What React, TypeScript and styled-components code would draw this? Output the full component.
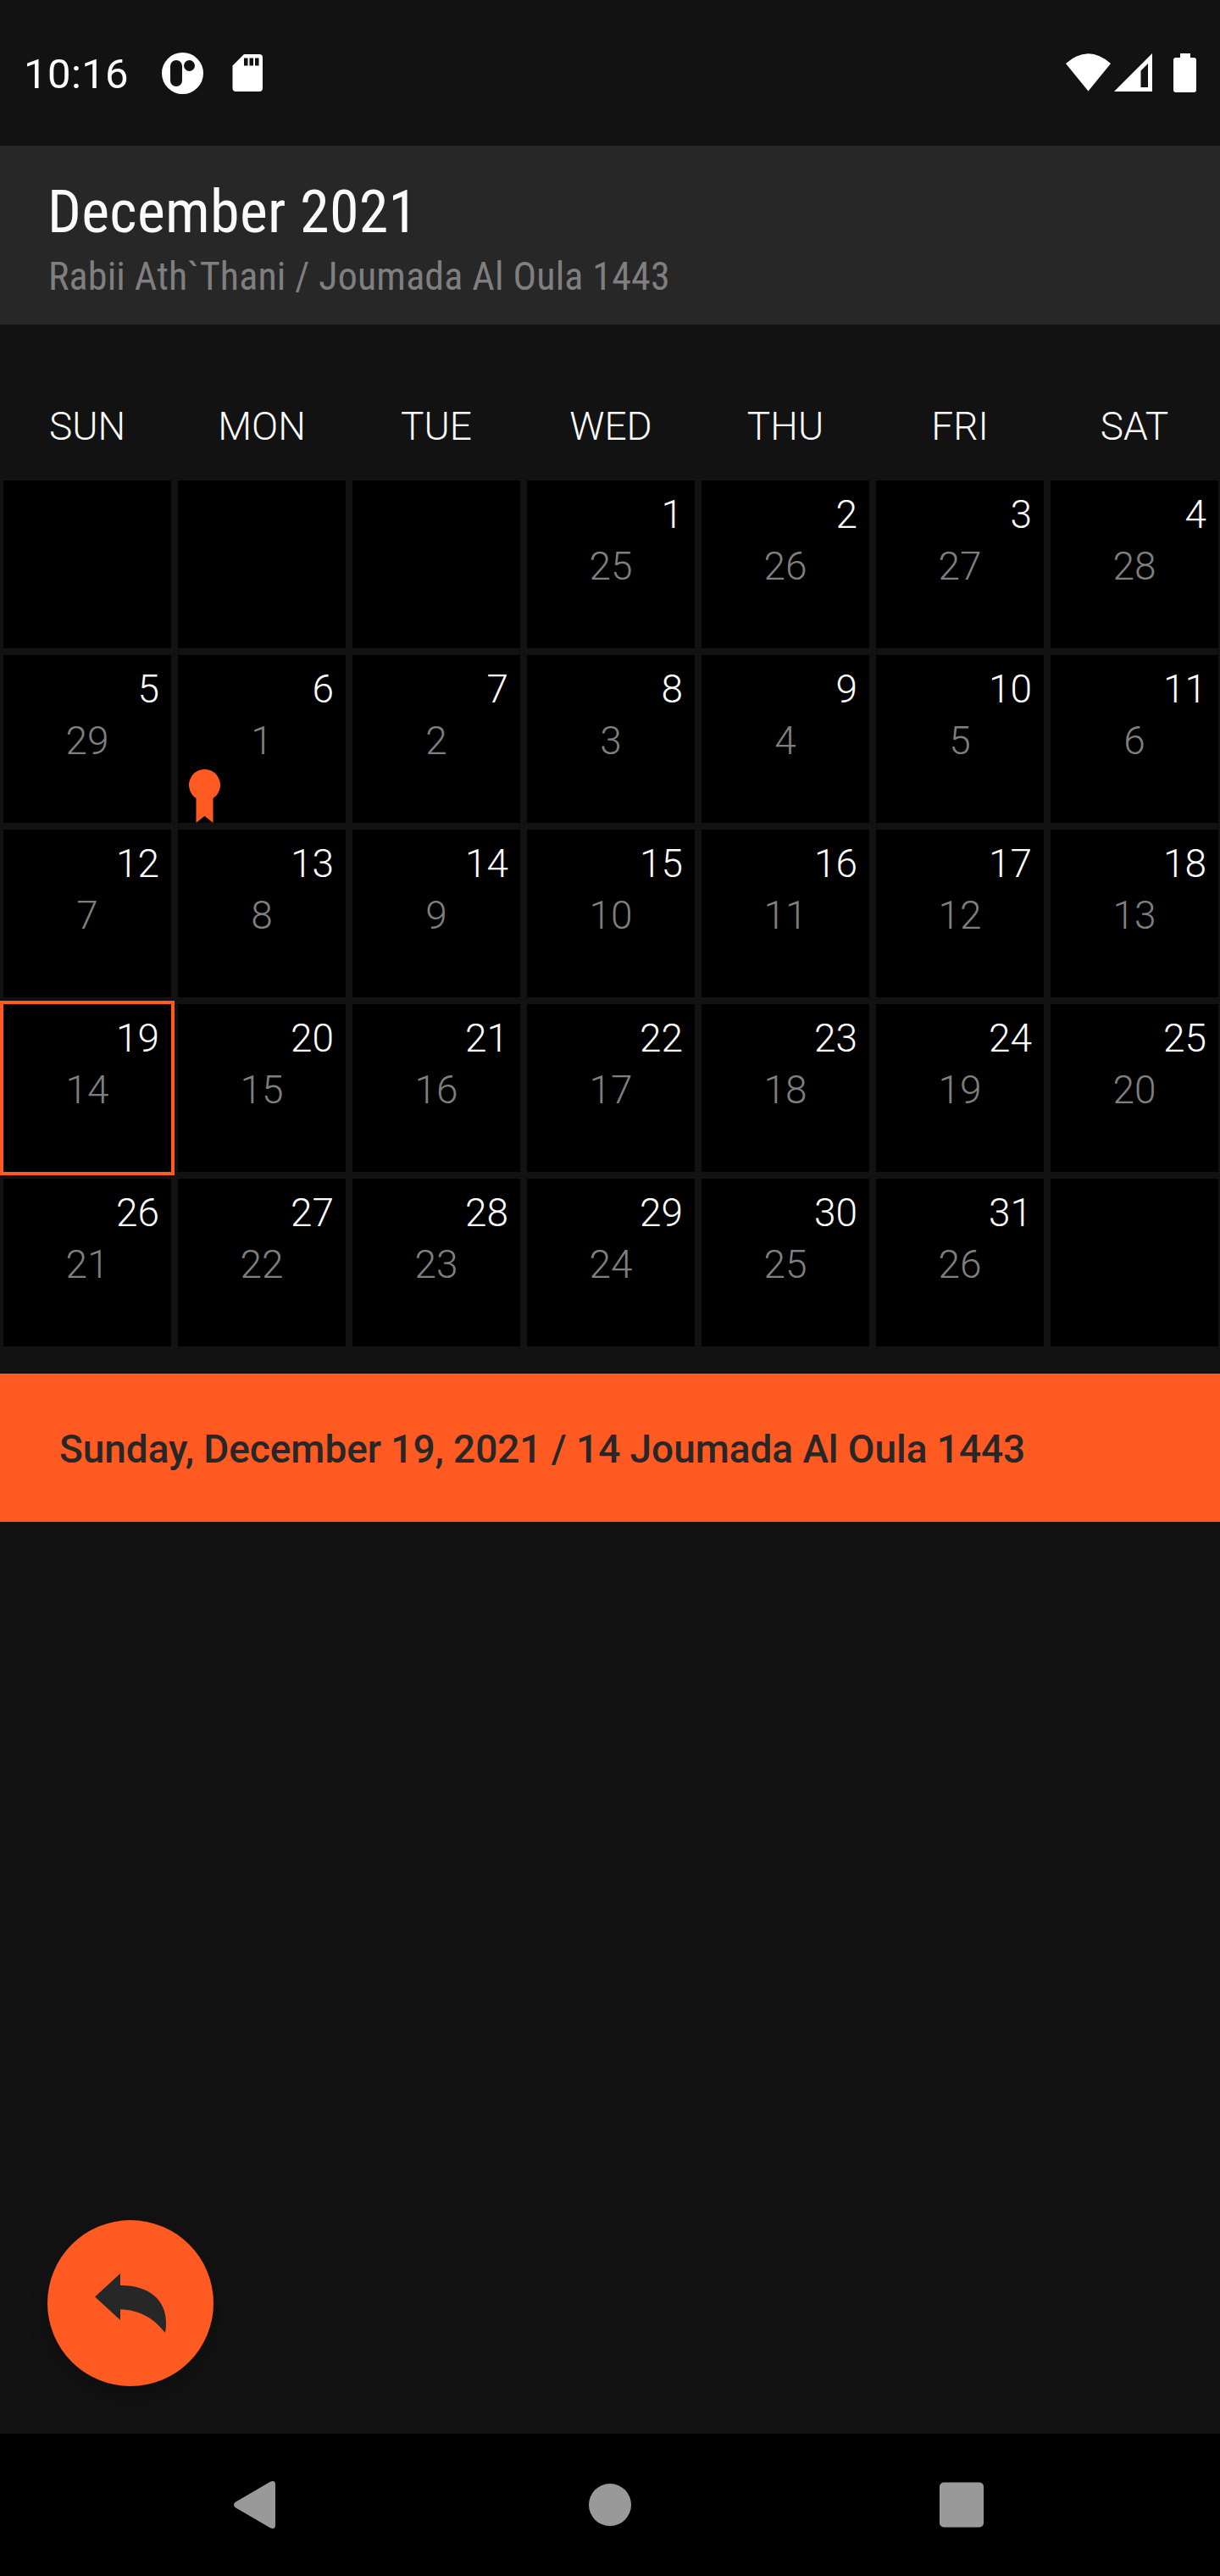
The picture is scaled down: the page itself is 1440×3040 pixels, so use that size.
import React from "react";
import styled, { createGlobalStyle } from "styled-components";

const Global = createGlobalStyle`
  *{box-sizing:border-box}
  html,body{margin:0;background:#121212}
  body{font-family:Roboto,"Liberation Sans",sans-serif;color:#fff}
  svg{display:block;flex:none}
`;

const Screen = styled.div`
  width: 1440px;
  height: 3040px;
  display: flex;
  flex-direction: column;
  overflow: hidden;
  background: #121212;
`;

const StatusBar = styled.div`
  height: 172px;
  display: flex;
  justify-content: space-between;
  align-items: center;
  padding: 0 27px 0 28px;
`;

const StatusGroup = styled.div`
  display: flex;
  align-items: center;
`;

const Clock = styled.span`
  font-size: 49px;
  line-height: 60px;
  letter-spacing: 0.4px;
  width: 163px;
  padding-top: 3px;
  white-space: nowrap;
`;

const Header = styled.header`
  height: 211px;
  background: #272727;
  padding: 36px 56px 0;
`;

const Title = styled.h1`
  margin: 0;
  font: 400 70px/84px "Roboto Condensed", Roboto, sans-serif;
  font-stretch: condensed;
  letter-spacing: 0.3px;
  color: #fafafa;
  white-space: nowrap;
`;

const Subtitle = styled.div`
  font: 400 46px/60px "Roboto Condensed", Roboto, sans-serif;
  font-stretch: condensed;
  letter-spacing: 0.17px;
  padding: 4px 0 0 1px;
  color: #7f7f7f;
  white-space: nowrap;
`;

const Weekdays = styled.div`
  display: grid;
  grid-template-columns: repeat(7, 206px);
  height: 180px;
  padding-top: 90px;
`;

const Weekday = styled.div`
  text-align: center;
  font-weight: 300;
  font-size: 46px;
  line-height: 60px;
  color: #fafafa;
`;

const Month = styled.div`
  display: grid;
  grid-template-columns: repeat(7, 206px);
  grid-auto-rows: 206px;
  height: 1058px;
`;

const Day = styled.div<{ $selected?: boolean }>`
  border: 4px solid ${(p) => (p.$selected ? "#ff5a21" : "#121212")};
  background: #000;
  display: flex;
  flex-direction: column;
  font-weight: 300;
  font-size: 46px;
  line-height: 61px;
  padding-top: 10px;
`;

const Gregorian = styled.span`
  text-align: right;
  padding-right: 14px;
  color: #fff;
`;

const Hijri = styled.span`
  text-align: center;
  color: #7f7f7f;
`;

const Marker = styled.svg`
  margin: 3px 0 0 13px;
`;

const Banner = styled.div`
  height: 175px;
  background: #ff5a21;
  color: #272727;
  display: flex;
  align-items: center;
  padding: 2px 70px 0;
  font-weight: 500;
  font-size: 46px;
  letter-spacing: -0.06px;
  white-space: nowrap;
`;

const Content = styled.main`
  flex: 1;
  display: flex;
  align-items: flex-end;
  padding: 0 56px 56px;
`;

const BackButton = styled.button`
  width: 196px;
  height: 196px;
  border: 0;
  padding: 0;
  border-radius: 50%;
  background: #ff5a21;
  box-shadow: 0 14px 26px rgba(0, 0, 0, 0.2);
`;

const NavBar = styled.nav`
  height: 168px;
  background: #000;
  display: grid;
  grid-template-columns: 419px 414px 52px;
  padding: 56px 0 0 276px;
`;

const weekdays = ["SUN", "MON", "TUE", "WED", "THU", "FRI", "SAT"];
const hijriOf = (d: number) => (d <= 5 ? d + 24 : d - 5);
const slots = Array.from({ length: 35 }, (_, i) => i - 2);

export default function App() {
  return (
    <Screen>
      <Global />
      <StatusBar>
        <StatusGroup>
          <Clock>10:16</Clock>
          <svg width="49" height="49" viewBox="0 0 49 49">
            <circle cx="24.5" cy="24.5" r="24.5" fill="#fff" />
            <rect x="10" y="9" width="14" height="31" rx="7" fill="#121212" />
            <circle cx="32.5" cy="15.5" r="6.5" fill="#121212" />
          </svg>
          <svg width="120" height="49" viewBox="0 0 120 49">
            <path d="M48 2H66Q70 2 70 6V42Q70 46 66 46H38.500Q34.500 46 34.500 42V15.500Z" fill="#fff" />
            <path d="M48 6.500h4.500v9h-4.500zM54.500 6.500h4.500v9h-4.500zM61 6.500h4.500v9h-4.500z" fill="#121212" />
          </svg>
        </StatusGroup>
        <svg width="155" height="48" viewBox="1258 62 155 48">
          <path d="M1258 75Q1284.500 51.500 1311 75L1284.500 107.500Z" fill="#fff" />
          <path fillRule="evenodd" d="M1360 63V108H1315ZM1355 75L1346.500 83.500V103H1355Z" fill="#fff" />
          <path d="M1393 63h12v5h4q3 0 3 3v35q0 3-3 3h-21q-3 0-3-3v-35q0-3 3-3h5z" fill="#fff" />
        </svg>
      </StatusBar>
      <Header>
        <Title>December 2021</Title>
        <Subtitle>Rabii Ath`Thani / Joumada Al Oula 1443</Subtitle>
      </Header>
      <Weekdays>
        {weekdays.map((d) => (
          <Weekday key={d}>{d}</Weekday>
        ))}
      </Weekdays>
      <Month>
        {slots.map((d) => (
          <Day key={d} $selected={d === 19}>
            {d > 0 && d < 32 && (
              <>
                <Gregorian>{d}</Gregorian>
                <Hijri>{hijriOf(d)}</Hijri>
              </>
            )}
            {d === 6 && (
              <Marker width="38" height="63" viewBox="0 0 38 63">
                <path d="M8.500 34A18.500 18.500 0 1 1 28.500 34V63L18.500 55L8.500 63Z" fill="#ff5a21" />
              </Marker>
            )}
          </Day>
        ))}
      </Month>
      <Banner>Sunday, December 19, 2021 / 14 Joumada Al Oula 1443</Banner>
      <Content>
        <BackButton aria-label="Back">
          <svg width="196" height="196" viewBox="0 0 196 196">
            <path
              d="M56 90.500L86 63V77C121 77 140 95 140 121Q140 128 139 133C126 116 108 105.500 86 105.500V118Z"
              fill="#272727"
            />
          </svg>
        </BackButton>
      </Content>
      <NavBar>
        <svg width="49" height="56" viewBox="0 0 49 56">
          <path d="M43 .8Q49-1.500 49 4V52Q49 57.500 43 55.200L1.500 31Q-1.500 28 1.500 25Z" fill="#999" />
        </svg>
        <svg width="50" height="56" viewBox="0 0 50 56">
          <circle cx="25" cy="28" r="25" fill="#999" />
        </svg>
        <svg width="52" height="56" viewBox="0 0 52 56">
          <rect y="1.500" width="52" height="53" rx="5" fill="#999" />
        </svg>
      </NavBar>
    </Screen>
  );
}
